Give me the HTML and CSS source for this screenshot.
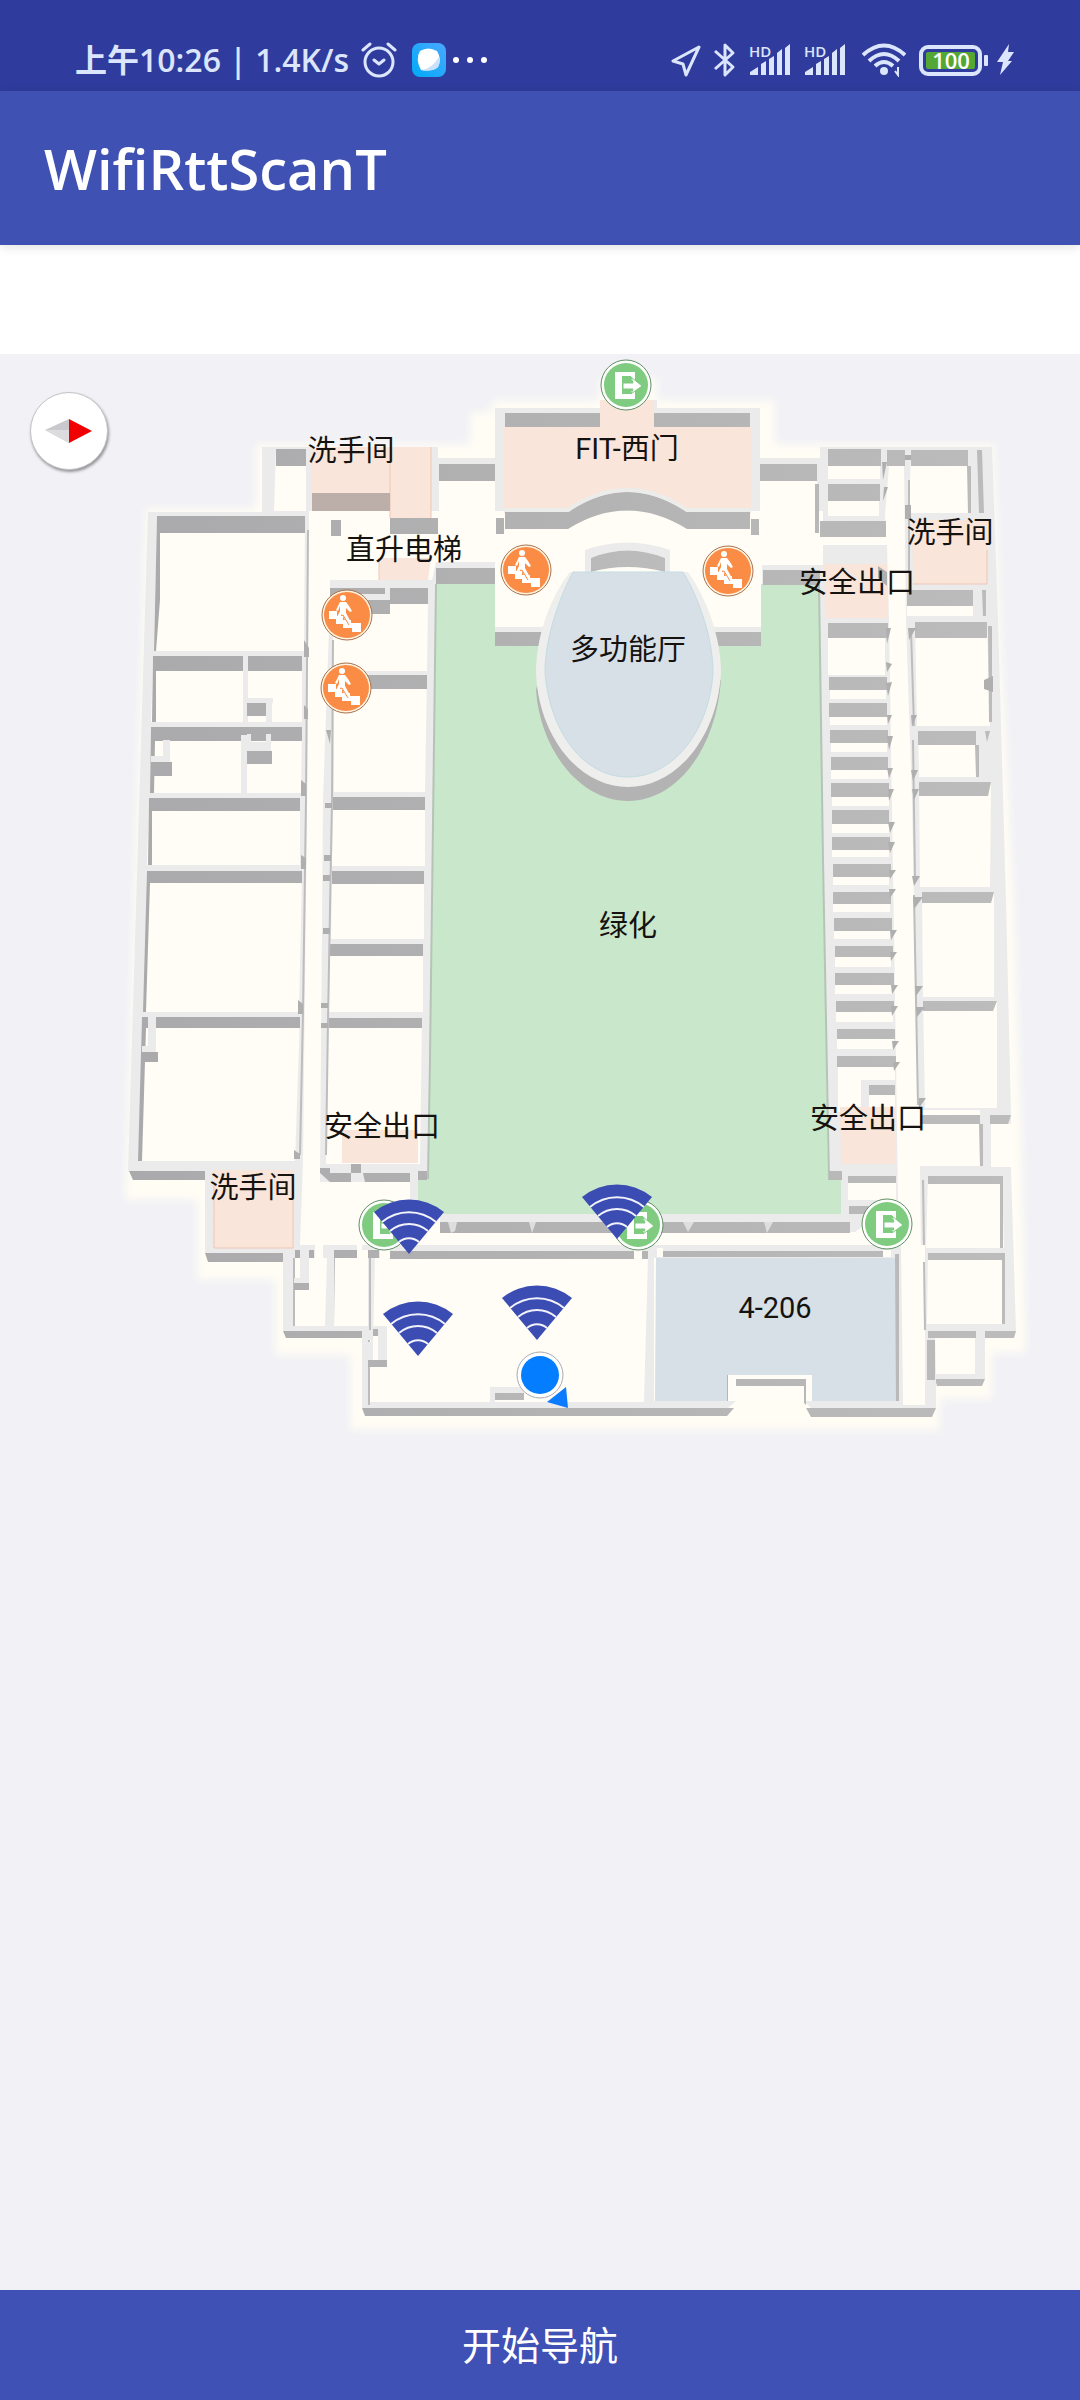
FILE: index.html
```html
<!DOCTYPE html>
<html lang="zh-CN">
<head>
<meta charset="utf-8">
<meta name="viewport" content="width=device-width, initial-scale=1">
<title>WifiRttScanT</title>
<link rel="stylesheet" href="styles.css">
</head>
<body>
<div class="screen">
  <div class="status">
    <span class="status-text">上午10:26 | 1.4K/s</span>
    <svg class="alarm" width="36" height="36" viewBox="0 0 36 36" fill="none" stroke="currentColor" stroke-width="3" stroke-linecap="round" stroke-linejoin="round"><circle cx="18" cy="20" r="14"/><path d="M13 18l5 4 5-4M2 8l7-6M34 8l-7-6"/></svg>
    <svg class="app-badge" width="34" height="34" viewBox="0 0 34 34"><defs><linearGradient id="badge" x1="1" y1="0" x2="0" y2="1"><stop offset="0" stop-color="#4aa8ff"/><stop offset="1" stop-color="#00aaf8"/></linearGradient></defs><rect width="34" height="34" rx="8" fill="url(#badge)"/><path d="M8 8Q16 3 25 8Q30 16 26 24Q21 29 9 27Q3 16 8 8Z" fill="#fff"/><path d="M9 27Q20 26 27 14Q29 21 25 25Q19 29 9 27Z" fill="#c9e2fb"/></svg>
    <svg width="36" height="8" viewBox="0 0 36 8" fill="#fff"><circle cx="4" cy="4" r="3"/><circle cx="18" cy="4" r="3"/><circle cx="32" cy="4" r="3"/></svg>
    <div class="status-right">
      <svg width="30" height="34" viewBox="0 0 30 34" fill="none" stroke="currentColor" stroke-width="3" stroke-linejoin="round"><path d="M28 4L2 18l10 3 3 11Z"/></svg>
      <svg width="22" height="36" viewBox="0 0 22 36" fill="none" stroke="currentColor" stroke-width="3" stroke-linejoin="round"><path d="M1 9l18 16-8 8V3l8 8L1 27"/></svg>
      <svg class="signal" width="42" height="34" viewBox="0 0 42 34" fill="currentColor"><text class="hd" x="0" y="14">HD</text><path d="M1 32v-3l8-5v8ZM12 32V21l5-3v14ZM20 32V16l5-3v19ZM28 32V10l5-4v26ZM36 32V5l5-4v31Z"/></svg>
      <svg class="signal" width="42" height="34" viewBox="0 0 42 34" fill="currentColor"><text class="hd" x="0" y="14">HD</text><path d="M1 32v-3l8-5v8ZM12 32V21l5-3v14ZM20 32V16l5-3v19ZM28 32V10l5-4v26ZM36 32V5l5-4v31Z"/></svg>
      <svg width="44" height="34" viewBox="0 0 44 34" fill="none" stroke="currentColor" stroke-width="4"><path d="M1 12Q22-7 43 12M7 18Q22 4 37 18M13 23Q22 15 31 23"/><circle cx="22" cy="28" r="2"/><path d="M36 24v8l-3-4" stroke-width="2"/></svg>
      <svg width="70" height="34" viewBox="0 0 70 34"><rect x="2" y="4" width="59" height="27" rx="7" fill="none" stroke="currentColor" stroke-width="4"/><rect x="7" y="9" width="49" height="17" rx="2" fill="#54a735"/><rect x="65" y="12" width="4" height="11" rx="1" fill="currentColor"/><text class="charge" x="32" y="26">100</text></svg>
      <svg width="18" height="34" viewBox="0 0 18 34" fill="currentColor"><path d="M13 1L1 19h6L4 32 16 18h-4L18 9h-6Z"/></svg>
    </div>
  </div>
  <header class="app-bar"><h1>WifiRttScanT</h1></header>
  <main class="map">
    <svg class="plan" viewBox="0 354 1080 1936" preserveAspectRatio="xMidYMin meet" role="img" aria-label="楼层平面图">
      <defs>
        <filter id="soft" x="-5%" y="-5%" width="110%" height="110%"><feGaussianBlur stdDeviation="4"/></filter>
        <linearGradient id="side" x1="0" y1="0" x2="1" y2="0"><stop offset="0" stop-color="#aaaaac"/><stop offset="1" stop-color="#bcbcbc"/></linearGradient>
        <g id="exit">
          <circle r="25" fill="#fff" stroke="#5f8f63"/><circle r="22" fill="#7fcb80"/>
          <path d="M-11-13H9V-5H5V-9H-4V9H5V6H9V14H-11Z" fill="#fff"/>
          <path d="M-3-2H7L5-8L16 1 5 9 7 4H-3Z" fill="#fff" stroke="#7fcb80"/>
        </g>
        <g id="stairs">
          <circle r="25" fill="#fff3e2" stroke="#a8734d"/><circle r="23" fill="#fb8c46"/>
          <g fill="#fff"><circle cx="-4" cy="-17" r="3"/><path d="M-7-13h6l3 4 3 5-2 1-4-4v5l7 13h-5L-5-1l-3 5-2-2 3-6v-5l-2 5-2-1Z"/><path d="M-18-4h8v5h6v4h8v3h10v9H5v-4H-4V9h-7V4h-7Z"/></g>
          <path d="M-4 0l6 10" fill="none" stroke="#fb8c46"/>
        </g>
        <g id="ap">
          <path d="M0 0L-35-42A55 55 0 0 1 35-42Z" fill="#3b4cb3"/>
          <path d="M-27-32A42 42 0 0 1 27-32M-19-23A29 29 0 0 1 19-23M-10-12A15 15 0 0 1 10-12" fill="none" stroke="#f2f2fb" stroke-width="2"/>
        </g>
      </defs>

      <!-- ground halo -->
      <path filter="url(#soft)" fill="#fffdf4" d="M256 444H470V412H492V400H600V378H657V400H775V444H994L1000 620 1014 900 1021 1110 1026 1353H992V1399H940V1430H350V1355H275V1280H197V1200H125L146 508H256Z"/>

      <!-- outer wall faces -->
      <path fill="url(#side)" d="M129 1171H206V1180H133ZM205 1253H284V1262H208ZM283 1331H362V1338H286ZM362 1408H734L727 1416H365ZM806 1408H936L932 1417H811ZM935 1379H985L982 1386H937ZM975 1331H1016L1014 1338H975ZM990 1114H1011L1008 1124H990Z"/>

      <!-- wall tops -->
      <path fill="#ebebeb" d="M262 447H438V458H495V408H600V400H657V408H760V458H820V447H992L998 620 1006 900 1011 1114V1169L1016 1331H985V1379H936V1408H811L804 1401V1379H736V1401L728 1408H362V1331H283V1253H205V1171H128L148 512H262Z"/>

      <!-- room floors -->
      <path fill="#fffdf5" d="M276 449H306V511H274Z
        M157 516H305L304 651H154ZM153 656H243V722H151ZM248 656H302V722H248Z
        M151 727H302L301 793H150ZM149 798H300V865H147ZM147 871H302L299 1012H145ZM142 1017H300L295 1161H139Z
        M333 604H428L427 671H333ZM334 675H427L425 792H334ZM333 797H425V866H332ZM332 871H424V939H331ZM330 944H423V1012H329ZM328 1018H422L420 1164H326Z
        M439 464H495V534H504V529H751V534H760V464H817V537H885V516L889 466H904L906 620 912 800 918 1110H980V1166H920L921 1248 925 1405H903V1253L900 1245H440V1245H300L303 1160 307 800 309 511H439Z
        M313 511H823V565H762V627H495V562H436L432 580H330V600L323 800 320 1173V1182H410V1213H440V1232H855L898 1200 896 1060 889 620 887 545H750V540H313Z
        M504 529H751V627H504Z
        M828 466H880V479H828ZM828 500H879V516H828ZM911 450H968V513H909ZM907 590H973V616H907ZM915 622H987L990 726H917ZM918 731H976V777H919ZM919 782H991L990 887H920ZM922 892H994V997H923ZM923 1001H997V1108H925ZM991 1124H1012V1167H991Z
        M928 1176H1002L1004 1248H926ZM928 1253H1004V1324H927ZM935 1338H975V1374H936Z
        M828 638H885V675H828ZM830 685H886V699H830ZM830 710H887V725H830ZM831 740H887V752H831ZM831 765H888V779H831ZM832 790H889V806H832ZM832 820H889V833H832ZM832 845H889V857H832ZM833 870H889V885H833ZM833 898H890V912H833ZM834 925H890V939H834ZM835 950H891V967H835ZM835 980H892V994H835ZM836 1005H893V1022H836ZM837 1035H894V1049H837ZM838 1060H895V1112H838ZM848 1176H896V1200H848ZM849 1206H896V1214H849Z
        M293 1258H327L325 1326H293ZM334 1250H368V1326H333ZM375 1258H648L644 1402H368V1340H373ZM654 1258H898V1401H654ZM901 1245H925V1401H903Z"/>

      <!-- courtyard -->
      <path fill="#c9e7cb" d="M436 584H495V632H761V584H819L823 860 828 1180H841V1215H418V1179H428Z"/>
      <path fill="none" stroke="#b5c4b6" stroke-width="2" d="M436 584L430 1060 428 1179M819 584L823 860 829 1180"/>

      <!-- coloured rooms -->
      <path fill="#f9e5d9" d="M312 447H390V493H312ZM390 447H431V518H390ZM379 558H431L428 580H379ZM504 427H600V400H654V427H751V513H687Q627 470 568 513H504ZM824 564H887V618H826ZM911 520H987V584H914ZM342 1130H418V1163H342ZM214 1170H293V1248H213ZM840 1107H896V1164H841Z"/>
      <path fill="none" stroke="#eec7b7" d="M390 447V518M431 447V518M214 1185V1248H293V1185M913 584H987V550M379 580V558"/>
      <path fill="#d6e0e6" d="M656 1258H896V1401H812V1375H728V1401H655Z"/>

      <!-- inner wall faces -->
      <path fill="url(#side)" d="M276 449H306V466H276ZM157 516H305V533H160V600L156 651H154ZM153 656H243V671H156V722H152ZM248 656H302V671H248ZM151 727H302V741H155L154 793H150ZM149 798H300V811H152V865H148ZM147 871H302V883H150L146 1012H143ZM142 1017H300V1028H146L142 1161H138Z
        M331 520H341V536H331ZM390 518H438V534H390ZM330 588H385V594H361V604H330ZM390 588H428V604H390V614H361V600H390ZM363 675H427V689H361ZM333 797H425V810H333ZM332 871H424V884H332ZM330 944H423V956H330ZM328 1018H422V1028H328Z
        M439 464H495V481H439ZM436 568H495V584H436ZM760 464H817V481H760ZM763 570H820V585H763ZM505 413H600V427H505ZM654 413H750V427H654ZM505 512H568Q627 472 687 512H750V529H687Q627 492 568 529H505ZM496 518H504V534H496ZM751 519H759V535H751ZM495 632H545V646H495ZM712 632H761V646H712Z
        M828 449H881V466H828ZM828 484H880V501H828ZM820 521H886V537H820ZM887 450H905V466H887ZM911 450H968V466H911ZM967 466H971V513H968ZM977 450H982L984 513H979ZM907 590H973V606H907ZM982 590H986V616H983ZM815 484H819V533H815ZM915 622H987V638H915ZM988 626H992V722H989ZM918 731H976V745H918ZM975 745H979V777H976ZM985 731H990L987 742ZM919 782H991L988 796H919ZM922 892H994L991 903H922ZM923 1001H997L993 1011H923ZM920 1115H980V1124H920ZM979 1124H983V1166H980ZM990 1115H1011L1008 1124H990ZM928 1176H1003V1248H1000V1184H928ZM928 1253H1005V1324H1002V1260H928ZM928 1331H976V1338H928ZM927 1340H935V1380H927Z
        M828 623H888V638H828ZM829 677H887V690H829ZM829 703H887V717H829ZM830 730H888V743H830ZM831 757H888V770H831ZM831 783H889V797H831ZM832 810H889V824H832ZM832 837H890V850H832ZM833 864H891V877H833ZM833 892H891V904H833ZM834 918H892V931H834ZM835 946H893V957H835ZM835 973H894V985H835ZM836 1001H894V1012H836ZM837 1029H895V1039H837ZM837 1056H896V1067H837ZM869 1085H895V1095H869ZM848 1176H896V1183H848ZM849 1206H870V1214H849Z
        M829 1171H842V1180H829ZM418 1171H427V1180H418ZM320 1168H330V1173H351V1182H330L320 1173ZM351 1164H361V1173H351ZM363 1173H410V1182H365ZM440 1222H850V1233H440ZM390 1251H634V1259H390ZM642 1251H648V1259H642ZM663 1251H883V1257H663ZM895 1254H899V1401H896ZM334 1250H357V1258H334ZM295 1250H314V1258H295ZM368 1250H379V1258H368ZM736 1379H806V1405L804 1403V1386H736ZM727 1375H728V1401H727Z"/>
      <!-- thin shaded edges along the corridors -->
      <path fill="none" stroke="#bdbdbe" stroke-width="2" d="M308 530L306 800 303 1012 300 1155M333 640L332 800 328 1020 326 1155M909 480L909 590M911 630L914 726M913 740L915 880M914 895L918 1105M923 1180L924 1245M924 1262L925 1330M334 1258L333 1326M294 1258V1326M370 1258V1330M369 1340V1405"/>
      <path fill="#afafb0" d="M304 640l5 8v9h-5ZM304 705l4 4v10h-4ZM301 780l5 4v12h-5ZM301 855l5 3v11h-5ZM298 1000l5 4v10h-5ZM294 1150l6 4v5h-6ZM326 730h5l-1 14ZM325 803h7v5h-7ZM324 855h7v6h-7ZM323 875h7v6h-7ZM323 928h7v6h-7ZM321 1003h7v5h-7ZM321 1023h7v5h-7ZM882 462h5l-4 18ZM884 487h4l-5 14ZM905 455h6v5h-6ZM905 505h6v14h-6ZM878 566l9 6v14l-9-8ZM886 628h5l-4 16ZM886 662l6 2-5 8ZM886 683l6-1-4 14ZM887 715h5l-4 9ZM887 736h6l-4 14ZM887 768h6l-4 10ZM888 789h6l-5 12ZM888 822h7l-5 11ZM888 842h7l-5 11ZM889 870h7l-6 9ZM889 889h7l-6 9ZM890 930h7l-6 10ZM890 952h7l-6 9ZM891 985h7l-6 9ZM891 1006h7l-6 10ZM892 1041h7l-6 9ZM893 1062h7l-6 9ZM908 628h8l-7 12ZM911 715h6l-5 12ZM911 770h7l-5 11ZM912 789h7l-5 11ZM912 876h8l-6 10ZM913 897h10l-9 12ZM915 986h8l-7 10ZM916 1007h9l-8 10ZM919 1098h7l-7 10ZM984 680l9-4v16l-9-3Z"/>

      <!-- partitions and niches -->
      <path fill="#ebebeb" d="M390 1245H900V1251H390ZM294 1245H379V1250H294ZM241 735H247V793H241ZM247 734H251V742H266V734H271V751H247ZM163 740H170V762H151V756H163ZM243 698H273V703H243ZM247 703H250V716H247ZM266 703H272V722H266ZM148 1017H156V1052H142V1046H148ZM300 1250H309V1283H294V1278H300ZM327 1250H334V1326H327ZM371 1326H387V1360H368V1342H371ZM861 1080H895V1085H869V1107H861ZM385 588H390V598H361V594H385ZM585 550Q627 535 670 550V572H665V558Q627 543 591 558V572H585ZM490 1387H524V1393H495V1402H490Z"/>
      <path fill="url(#side)" d="M151 762H172V776H151ZM247 751H272V764H247ZM247 703H266V716H247ZM142 1052H158V1062H142ZM294 1283H309V1290H294ZM368 1360H387V1367H368ZM373 1329H378V1336H373ZM495 1393H524V1400H495ZM591 558Q627 543 665 558V572Q627 562 591 572Z"/>
      <path fill="#fffdf5" d="M373 1336H378V1360H373ZM634 1248H642V1260H634ZM657 1248H663V1257H657ZM883 1250H891V1257H883ZM380 1245H390V1260H380ZM315 1245H323V1260H315ZM357 1245H362V1260H357Z"/>
      <path fill="#dedede" d="M448 1222H457L455 1231 451 1233ZM529 1222H536L532 1233ZM683 1222H694L688 1232ZM764 1222H773L767 1233Z"/>
      <path fill="#ebebeb" d="M440 1214H848V1222H440Z"/>
      <path fill="#bcaea8" d="M312 493H390V511H312Z"/>
      <path fill="none" stroke="#ececea" stroke-width="4" d="M504 510H568Q627 470 687 510H751"/>

      <!-- hall -->
      <path fill="#b3b3b4" d="M540 675L536 690C540 750 580 801 628 801S716 750 721 680Z"/>
      <path fill="#eeeeec" d="M570 572C548 600 536 640 536 672C538 735 578 787 628 787S718 735 721 672C721 640 708 600 688 572Z"/>
      <path fill="#d6e0e6" stroke="#c3dce4" d="M573 572H683C700 600 713 640 713 672C710 728 675 777 628 777S549 728 545 672C545 640 558 600 573 572Z"/>

      <g class="labels">
        <text x="351" y="461">洗手间</text><text x="404" y="560">直升电梯</text><text x="627" y="459">FIT-西门</text>
        <text x="628" y="660">多功能厅</text><text x="628" y="936">绿化</text><text x="950" y="543">洗手间</text>
        <text x="857" y="593">安全出口</text><text x="868" y="1129">安全出口</text><text x="382" y="1137">安全出口</text>
        <text x="253" y="1198">洗手间</text><text x="775" y="1318">4-206</text>
      </g>
      <use href="#exit" x="626" y="385"/><use href="#exit" x="887" y="1224"/><use href="#exit" x="638" y="1225"/><use href="#exit" x="384" y="1225"/>
      <use href="#stairs" x="347" y="615"/><use href="#stairs" x="346" y="688"/><use href="#stairs" x="526" y="570"/><use href="#stairs" x="728" y="571"/>
      <use href="#ap" x="409" y="1254"/><use href="#ap" x="418" y="1356"/><use href="#ap" x="537" y="1340"/><use href="#ap" x="617" y="1239"/>
      <path d="M566 1387L547 1402 568 1408Z" fill="#0d7bff"/>
      <circle cx="540" cy="1375" r="23" fill="#fff" stroke="#a9a9b2"/><circle cx="540" cy="1375" r="19" fill="#057dff"/>
    </svg>
    <button class="compass" type="button" aria-label="指南针"><svg width="48" height="24" viewBox="0 0 48 24"><path d="M24 0L0 11 24 24Z" fill="#c9c9cd"/><path d="M0 11H24V24Z" fill="#dcdcdf"/><path d="M24 0L47 12 24 24Z" fill="#f00000"/></svg></button>
  </main>
  <button class="start" type="button">开始导航</button>
</div>
</body>
</html>
```
FILE: styles.css
```css
* { box-sizing: border-box; }

body {
  margin: 0;
  background: #fff;
  font-family: Roboto, "Noto Sans CJK SC", sans-serif;
}

svg { display: block; flex: none; }

.screen {
  display: flex;
  flex-direction: column;
  min-height: 100vh;
}

.status {
  display: flex;
  align-items: center;
  height: 91px;
  padding: 28px 66px 0 75px;
  background: #303c9d;
  color: #dbe5fc;
}

.status-text {
  font: 600 32px/40px "Open Sans", "Noto Sans CJK SC", sans-serif;
  white-space: nowrap;
}

.alarm { margin-left: 12px; }
.app-badge { margin: 0 6px 0 15px; }

.status-right {
  display: flex;
  align-items: center;
  gap: 13px;
  margin-left: auto;
}

.status-right svg:nth-last-child(3) { margin-left: 3px; }
.status-right svg:last-child { margin-left: -6px; }

.signal { overflow: visible; }

.hd { font: 600 15px "Open Sans", sans-serif; }

.charge {
  font: 600 22px "Open Sans", sans-serif;
  fill: #fff;
  text-anchor: middle;
}

.app-bar {
  position: relative;
  display: flex;
  align-items: center;
  height: 154px;
  padding: 0 44px;
  background: #3f51b2;
  box-shadow: 0 2px 10px rgba(0, 0, 0, 0.12);
}

.app-bar h1 {
  margin: 0;
  color: #fff;
  font: 600 56px/72px "Open Sans", sans-serif;
}

.map {
  position: relative;
  flex: 1;
  margin-top: 109px;
  background: #f1f1f6;
}

.plan { width: 100%; height: auto; }

.labels {
  font-size: 29px;
  fill: #15120f;
  text-anchor: middle;
}

.compass {
  position: absolute;
  top: 38px;
  left: 30px;
  display: grid;
  place-items: center;
  width: 78px;
  height: 78px;
  padding: 0;
  border: 1px solid #c4c4c8;
  border-radius: 50%;
  background: #fff;
  box-shadow: 1px 2px 3px rgba(0, 0, 0, 0.4);
}

.start {
  height: 110px;
  padding: 4px 0 0;
  border: 0;
  background: #3f51b5;
  color: #fff;
  font: 400 39px/48px Roboto, "Noto Sans CJK SC", sans-serif;
}
```
